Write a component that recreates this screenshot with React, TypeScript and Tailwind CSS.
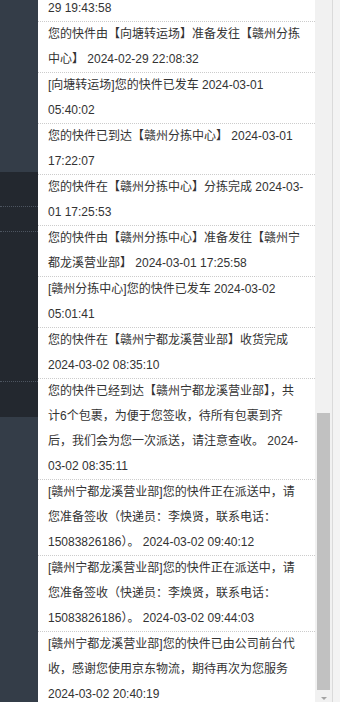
// Tracking log panel, scrolled to the end of the list.
const entries: string[][] = [
  ["您的快件已到达【向塘转运场】 2024-02-", "29 19:43:58"],
  ["您的快件由【向塘转运场】准备发往【赣州分拣", "中心】 2024-02-29 22:08:32"],
  ["[向塘转运场]您的快件已发车 2024-03-01", "05:40:02"],
  ["您的快件已到达【赣州分拣中心】 2024-03-01", "17:22:07"],
  ["您的快件在【赣州分拣中心】分拣完成 2024-03-", "01 17:25:53"],
  ["您的快件由【赣州分拣中心】准备发往【赣州宁", "都龙溪营业部】 2024-03-01 17:25:58"],
  ["[赣州分拣中心]您的快件已发车 2024-03-02", "05:01:41"],
  ["您的快件在【赣州宁都龙溪营业部】收货完成", "2024-03-02 08:35:10"],
  [
    "您的快件已经到达【赣州宁都龙溪营业部】，共",
    "计6个包裹，为便于您签收，待所有包裹到齐",
    "后，我们会为您一次派送，请注意查收。 2024-",
    "03-02 08:35:11",
  ],
  [
    "[赣州宁都龙溪营业部]您的快件正在派送中，请",
    "您准备签收（快递员：李焕贤，联系电话：",
    "15083826186）。 2024-03-02 09:40:12",
  ],
  [
    "[赣州宁都龙溪营业部]您的快件正在派送中，请",
    "您准备签收（快递员：李焕贤，联系电话：",
    "15083826186）。 2024-03-02 09:44:03",
  ],
  [
    "[赣州宁都龙溪营业部]您的快件已由公司前台代",
    "收，感谢您使用京东物流，期待再次为您服务",
    "2024-03-02 20:40:19",
  ],
];

function Sidebar() {
  return (
    <div className="flex w-[38px] shrink-0 flex-col">
      <div className="h-[172px] bg-[#343d48]" />
      <div className="flex flex-col bg-[#23282f]">
        <div className="h-[35px] border-b border-dotted border-[#4d5560]" />
        <div className="h-[25px] border-b border-dotted border-[#4d5560]" />
        <div className="h-[150px] border-b border-dotted border-[#4d5560]" />
        <div className="h-[35px]" />
      </div>
      <div className="flex-1 bg-[#343d48]" />
    </div>
  );
}

function Scrollbar() {
  return (
    <div className="flex w-[17px] shrink-0 flex-col bg-[#f1f1f1] px-[2px]">
      <div className="h-[413px]" />
      <div className="h-[277px] bg-[#c1c1c1]" />
      <div className="flex flex-1 justify-center pt-[7px]">
        <div className="h-0 w-0 border-x-[3px] border-t-[3px] border-x-transparent border-t-[#a3a3a3]" />
      </div>
    </div>
  );
}

export default function App() {
  return (
    <div className="flex h-[702px] w-[340px] overflow-hidden bg-white font-['Liberation_Sans','Noto_Sans_CJK_SC',sans-serif]">
      <Sidebar />
      <div className="w-[277px] shrink-0 overflow-hidden">
        <div className="-mt-[29px] flex flex-col">
          {entries.map((lines, i) => (
            <div
              key={i}
              className={
                i < entries.length - 1
                  ? "border-b border-dotted border-[#cccccc] px-[10px]"
                  : "px-[10px]"
              }
            >
              {lines.map((line, j) => (
                <div key={j} className="whitespace-pre text-[12px] leading-[25px] text-[#333333]">
                  {line}
                </div>
              ))}
            </div>
          ))}
        </div>
      </div>
      <Scrollbar />
      <div className="w-px shrink-0 bg-[#dadada]" />
      <div className="flex-1 bg-[#f3f3f3]" />
    </div>
  );
}
